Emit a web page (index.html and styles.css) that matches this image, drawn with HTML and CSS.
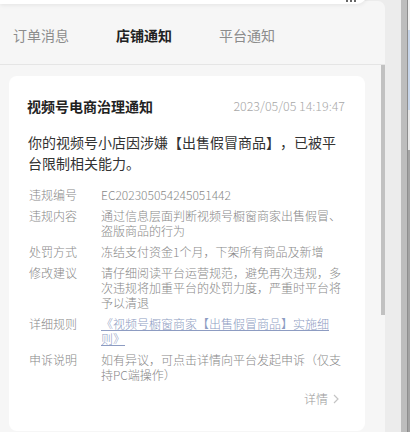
FILE: index.html
```html
<!DOCTYPE html>
<html lang="zh-CN">
<head>
  <meta charset="UTF-8" />
  <meta name="viewport" content="width=device-width, initial-scale=1.0"/>
  <title>消息通知</title>
  <link rel="stylesheet" href="styles.css">
</head>
<body>
  <div class="screen">
    <div class="popup-edge"></div>

    <div class="panel">
      <div class="tabs">
        <div class="tab">订单消息</div>
        <div class="tab active">店铺通知</div>
        <div class="tab">平台通知</div>
      </div>

      <div class="list">
        <div class="card">
          <div class="card-head">
            <div class="card-title">视频号电商治理通知</div>
            <div class="card-time">2023/05/05 14:19:47</div>
          </div>
          <div class="card-summary">你的视频号小店因涉嫌【出售假冒商品】，已被平台限制相关能力。</div>

          <div class="details">
            <div class="row"><span class="label">违规编号</span><span class="value">EC202305054245051442</span></div>
            <div class="row"><span class="label">违规内容</span><span class="value">通过信息层面判断视频号橱窗商家出售假冒、盗版商品的行为</span></div>
            <div class="row"><span class="label">处罚方式</span><span class="value">冻结支付资金1个月，下架所有商品及新增</span></div>
            <div class="row"><span class="label">修改建议</span><span class="value">请仔细阅读平台运营规范，避免再次违规，多次违规将加重平台的处罚力度，严重时平台将予以清退</span></div>
            <div class="row"><span class="label">详细规则</span><span class="value"><a class="rule-link" href="#">《视频号橱窗商家【出售假冒商品】实施细则》</a></span></div>
            <div class="row"><span class="label">申诉说明</span><span class="value">如有异议，可点击详情向平台发起申诉（仅支持PC端操作）</span></div>
          </div>

          <div class="card-foot">
            <span class="more">详情
              <svg width="8" height="10" viewBox="0 0 8 10"><path d="M2 1l4 4-4 4" fill="none" stroke="#c4c4c4" stroke-width="1.2"/></svg>
            </span>
          </div>
        </div>
      </div>

      <div class="scroll-thumb"></div>
    </div>

    <div class="side-gap"></div>
    <div class="side-bar"></div>
    <div class="side-edge">
      <div class="side-edge-top"></div>
    </div>
  </div>
</body>
</html>
```

FILE: styles.css
```css
html, body {
  margin: 0;
  padding: 0;
  background: #ececec;
  font-family: "Noto Sans CJK SC", "Noto Sans", sans-serif;
  color: #333;
}

.screen {
  position: relative;
  display: flex;
  width: 410px;
  height: 432px;
  overflow: hidden;
}

/* bit of the popup sitting above the panel */
.popup-edge {
  position: absolute;
  top: -10px;
  left: 0;
  width: 368px;
  height: 14px;
  background: #fff;
  border-bottom-right-radius: 12px;
  box-shadow: 0 1px 4px rgba(0, 0, 0, 0.08);
  z-index: 5;
}

.popup-edge::after {
  content: "";
  position: absolute;
  right: 12px;
  bottom: 2px;
  width: 10px;
  height: 2px;
  background: repeating-linear-gradient(to right, #666 0, #666 2px, transparent 2px, transparent 4px);
}

.panel {
  position: relative;
  width: 385px;
  flex: none;
  background: #f6f6f6;
  border-top-right-radius: 7px;
  margin-top: 1px;
}

.tabs {
  display: flex;
  gap: 47px;
  height: 64px;
  padding-left: 13px;
  padding-top: 5px;
  align-items: center;
  border-bottom: 1px solid #e5e5e5;
  box-sizing: border-box;
}

.tab {
  font-size: 14px;
  color: #8c8c8c;
  width: 56px;
}

.tab.active {
  color: #222;
  font-weight: bold;
}

.list {
  padding: 11px 20px 0 9px;
}

.card {
  background: #fff;
  border-radius: 8px;
  padding: 20px 18px 24px 18px;
}

.card-head {
  display: flex;
  justify-content: space-between;
  align-items: center;
  line-height: 20px;
}

.card-title {
  font-size: 14px;
  font-weight: bold;
  color: #222;
}

.card-time {
  font-size: 12.4px;
  font-weight: 300;
  color: #a8a8a8;
  margin-right: 2px;
}

.card-summary {
  margin-top: 16px;
  font-size: 14px;
  line-height: 20.5px;
  color: #333;
  padding-left: 1px;
  text-spacing-trim: space-all;
}

.details {
  margin-top: 14px;
  display: flex;
  flex-direction: column;
  gap: 6px;
  padding-left: 2px;
}

.row {
  display: flex;
  font-size: 12px;
  font-weight: 300;
  line-height: 15px;
  color: #888;
  text-spacing-trim: space-all;
}

.label {
  width: 72px;
  flex: none;
}

.value {
  width: 246px;
}

.rule-link {
  color: #8d9cc2;
  text-decoration: underline;
}

.card-foot {
  display: flex;
  justify-content: flex-end;
  margin-top: 9px;
  margin-right: 7px;
}

.more {
  display: flex;
  align-items: center;
  gap: 4px;
  font-size: 12px;
  font-weight: 300;
  line-height: 16px;
  color: #999;
}

.scroll-thumb {
  position: absolute;
  right: 0;
  top: 64px;
  width: 4px;
  height: 250px;
  background: #c1c1c1;
}

.side-gap {
  width: 16px;
  flex: none;
}

.side-bar {
  width: 6px;
  flex: none;
  background: #bdbdbd;
}

.side-edge {
  flex: 1;
  background: #a3a3a3;
  border-left: 1px solid #8e8e8e;
}

.side-edge-top {
  height: 150px;
  background: linear-gradient(to bottom, #f2f2f2 0, #f2f2f2 30px, #c8d6ea 30px, #c8d6ea 110px, #e8e8e8 110px);
}
```
